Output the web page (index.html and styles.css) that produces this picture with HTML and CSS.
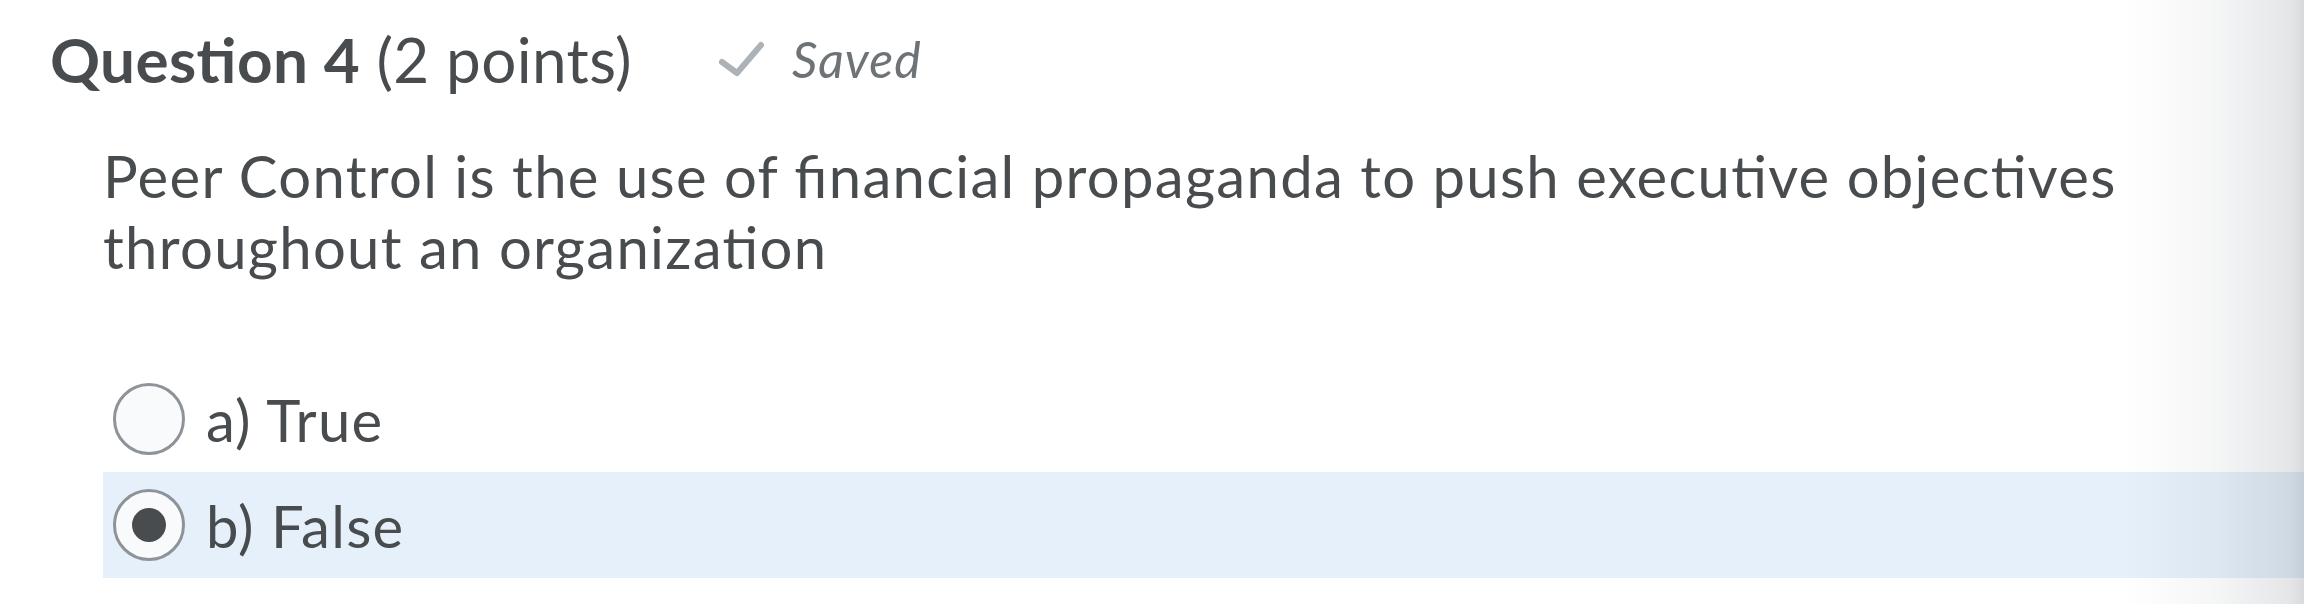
FILE: index.html
```html
<!DOCTYPE html>
<html lang="en">
<head>
    <meta charset="UTF-8">
    <meta name="viewport" content="width=device-width, initial-scale=1.0">
    <title>Quiz - Question 4</title>
    <link rel="stylesheet" href="styles.css">
</head>
<body>
    <div class="quiz">
        <div class="q-header">
            <h2 class="q-title"><strong>Question 4</strong> (2 points)</h2>
            <svg class="saved-check" width="46" height="36" viewBox="0 0 46 36">
                <path d="M4 21 L19 32 L43 4" fill="none" stroke="#adb2b7" stroke-width="6" stroke-linecap="round" stroke-linejoin="round"/>
            </svg>
            <span class="saved-text">Saved</span>
        </div>

        <div class="q-body">
            <p class="q-text">Peer Control is the use of financial propaganda to push executive objectives throughout an organization</p>

            <div class="options">
                <label class="option">
                    <span class="radio"></span>
                    <span class="option-text">a) True</span>
                </label>
                <label class="option selected">
                    <span class="radio checked"></span>
                    <span class="option-text">b) False</span>
                </label>
            </div>
        </div>
    </div>

    <!-- page edge shadow -->
    <div class="edge-shade"></div>
</body>
</html>
```

FILE: styles.css
```css
body {
    margin: 0;
    background: #fff;
    font-family: Lato, "Open Sans", sans-serif;
    font-feature-settings: "liga" 1, "clig" 1;
    color: #494c4e;
    overflow: hidden;
}
.quiz {
    padding: 22px 0 0 50px;
}

/* Header */
.q-header {
    display: flex;
    align-items: center;
}
.q-title {
    margin: 0;
    font-size: 62px;
    letter-spacing: 0.4px;
    line-height: 1.2;
    font-weight: 400;
}
.q-title strong { font-weight: 700; }
.saved-check {
    margin-left: 86px;
}
.saved-text {
    margin-left: 28px;
    font-size: 50px;
    letter-spacing: 1px;
    line-height: 1.2;
    font-style: italic;
    color: #6e7376;
}

/* Question */
.q-body {
    padding-left: 53px;
}
.q-text {
    margin: 44px 0 0 0;
    max-width: 2080px;
    font-size: 58px;
    letter-spacing: 1.3px;
    line-height: 71px;
}
.options {
    margin-top: 84px;
}
.option {
    display: flex;
    align-items: center;
    height: 106px;
    padding-left: 10px;
    font-size: 58px;
    letter-spacing: 1.3px;
}
.option.selected { background: #e6f0fa; }
.radio {
    box-sizing: border-box;
    width: 72px;
    height: 72px;
    border: 3px solid #8e9399;
    border-radius: 50%;
    background: #f9fafb;
    display: flex;
    align-items: center;
    justify-content: center;
}
.radio.checked::after {
    content: "";
    width: 34px;
    height: 34px;
    border-radius: 50%;
    background: #494c4e;
}
.option-text {
    margin-left: 21px;
}

.edge-shade {
    position: fixed;
    top: 0;
    right: 0;
    width: 180px;
    height: 100%;
    pointer-events: none;
    background: linear-gradient(to right, rgba(90, 100, 110, 0) 0%, rgba(90, 100, 110, 0.06) 50%, rgba(90, 100, 110, 0.16) 92%, rgba(90, 100, 110, 0.24) 100%);
}
```
